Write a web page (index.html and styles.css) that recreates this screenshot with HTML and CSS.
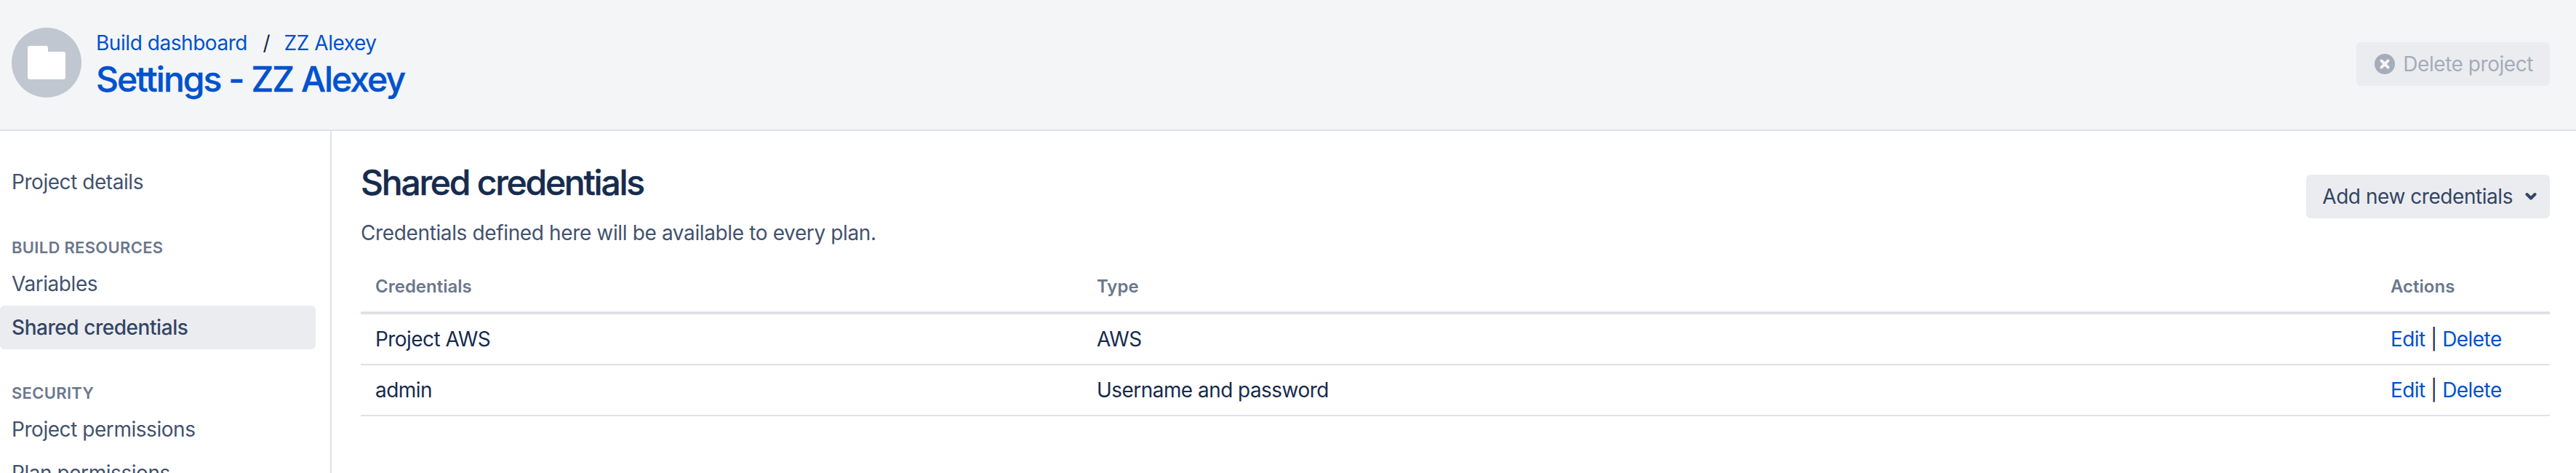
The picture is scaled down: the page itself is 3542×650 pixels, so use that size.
FILE: index.html
```html
<!DOCTYPE html>
<html lang="en">
<head>
    <meta charset="UTF-8">
    <title>Settings - ZZ Alexey</title>
    <link rel="stylesheet" href="styles.css">
</head>
<body>
    <header class="page-header">
        <div class="project-avatar">
            <svg width="52" height="46" viewBox="0 0 52 46"><path fill="#fff" d="M3 0h22a3 3 0 0 1 3 3v5h21a3 3 0 0 1 3 3v32a3 3 0 0 1-3 3H3a3 3 0 0 1-3-3V3a3 3 0 0 1 3-3z"/></svg>
        </div>
        <div class="page-titles">
            <div class="breadcrumbs">
                <a href="#">Build dashboard</a>
                <span class="crumb-sep">/</span>
                <a href="#">ZZ Alexey</a>
            </div>
            <h1><a href="#">Settings - ZZ Alexey</a></h1>
        </div>
        <button class="btn btn-delete" disabled>
            <svg width="28" height="28" viewBox="0 0 28 28"><circle cx="14" cy="14" r="14" fill="#a5adba"/><path d="M9.500 9.500l9 9M18.500 9.500l-9 9" stroke="#f4f5f7" stroke-width="4" stroke-linecap="round"/></svg>
            Delete project
        </button>
    </header>
    <div class="page-body">
        <nav class="sidebar">
            <a class="nav-item" href="#">Project details</a>
            <div class="nav-heading">Build resources</div>
            <a class="nav-item" href="#">Variables</a>
            <a class="nav-item active" href="#">Shared credentials</a>
            <div class="nav-heading">Security</div>
            <a class="nav-item" href="#">Project permissions</a>
            <a class="nav-item" href="#">Plan permissions</a>
        </nav>
        <main class="content">
            <div class="content-top">
                <div>
                    <h2>Shared credentials</h2>
                    <p class="description">Credentials defined here will be available to every plan.</p>
                </div>
                <button class="btn btn-add">
                    Add new credentials
                    <svg width="16" height="12" viewBox="0 0 16 12"><path d="M2.500 3l5.500 5.500L13.500 3" fill="none" stroke="#344563" stroke-width="4" stroke-linecap="round" stroke-linejoin="round"/></svg>
                </button>
            </div>
            <table class="cred-table">
                <thead>
                    <tr>
                        <th class="col-name">Credentials</th>
                        <th class="col-type">Type</th>
                        <th class="col-actions">Actions</th>
                    </tr>
                </thead>
                <tbody>
                    <tr>
                        <td>Project AWS</td>
                        <td>AWS</td>
                        <td><a href="#">Edit</a> | <a href="#">Delete</a></td>
                    </tr>
                    <tr>
                        <td>admin</td>
                        <td>Username and password</td>
                        <td><a href="#">Edit</a> | <a href="#">Delete</a></td>
                    </tr>
                </tbody>
            </table>
        </main>
    </div>
</body>
</html>
```

FILE: styles.css
```css
html, body { margin: 0; height: 100%; overflow: hidden; }
body { font-family: Inter, "Liberation Sans", sans-serif; font-size: 28px; letter-spacing: -0.45px; color: #172b4d; background: #fff; }
a { color: #0052cc; text-decoration: none; }

.page-header { display: flex; align-items: flex-start; height: 140px; padding: 38px 36px 0 16px; background: #f4f5f7; border-bottom: 2px solid #dfe1e6; }
.project-avatar { width: 96px; height: 96px; border-radius: 50%; background: #c1c7d0; display: flex; align-items: center; justify-content: center; margin-right: 20px; }
.page-titles { flex: 1; }
.breadcrumbs { line-height: 40px; height: 40px; margin-top: 1px; }
.crumb-sep { margin: 0 12px 0 14px; }
h1 { margin: 2px 0 0; font-size: 48px; font-weight: 500; line-height: 56px; letter-spacing: -1.95px; -webkit-text-stroke: 0.4px; }

.btn { font-family: inherit; font-size: 28px; letter-spacing: -0.45px; height: 60px; border: 0; border-radius: 6px; background: #ebecf0; display: inline-flex; align-items: center; }
.btn-delete { color: #a5adba; padding: 0 23px 0 25px; gap: 11px; margin-top: 20px; }
.btn-add { color: #344563; padding: 0 18px 0 22px; gap: 17px; margin-top: 20px; }

.page-body { display: flex; height: 470px; }
.sidebar { width: 434px; padding: 40px 20px 0 0; border-right: 2px solid #dfe1e6; flex-shrink: 0; }
.nav-item { display: block; height: 60px; line-height: 60px; padding-left: 16px; color: #42526e; border-radius: 6px; }
.nav-item.active { background: #ebecf0; color: #344563; font-weight: 500; }
.nav-heading { font-size: 22px; font-weight: 600; color: #6b778c; text-transform: uppercase; letter-spacing: 0.3px; line-height: 30px; padding: 45px 0 5px 16px; }

.content { flex: 1; padding: 40px 36px 0 40px; }
.content-top { display: flex; justify-content: space-between; align-items: flex-start; }
h2 { margin: 3px 0 0; font-size: 48px; font-weight: 500; line-height: 56px; letter-spacing: -2.25px; -webkit-text-stroke: 0.4px; }
.description { margin: 21px 0 0; color: #42526e; line-height: 40px; letter-spacing: -0.37px; }

.cred-table { width: 100%; table-layout: fixed; border-collapse: separate; border-spacing: 0; margin-top: 28px; }
.cred-table th { box-sizing: border-box; text-align: left; font-size: 24px; font-weight: 600; letter-spacing: 0; color: #6b778c; height: 64px; padding: 0 20px 10px; border-bottom: 4px solid #dfe1e6; }
.cred-table td { box-sizing: border-box; height: 70px; padding: 0 20px; border-bottom: 2px solid #dfe1e6; letter-spacing: -0.55px; }
.col-name { width: 992px; }
.col-actions { width: 239px; }
```
